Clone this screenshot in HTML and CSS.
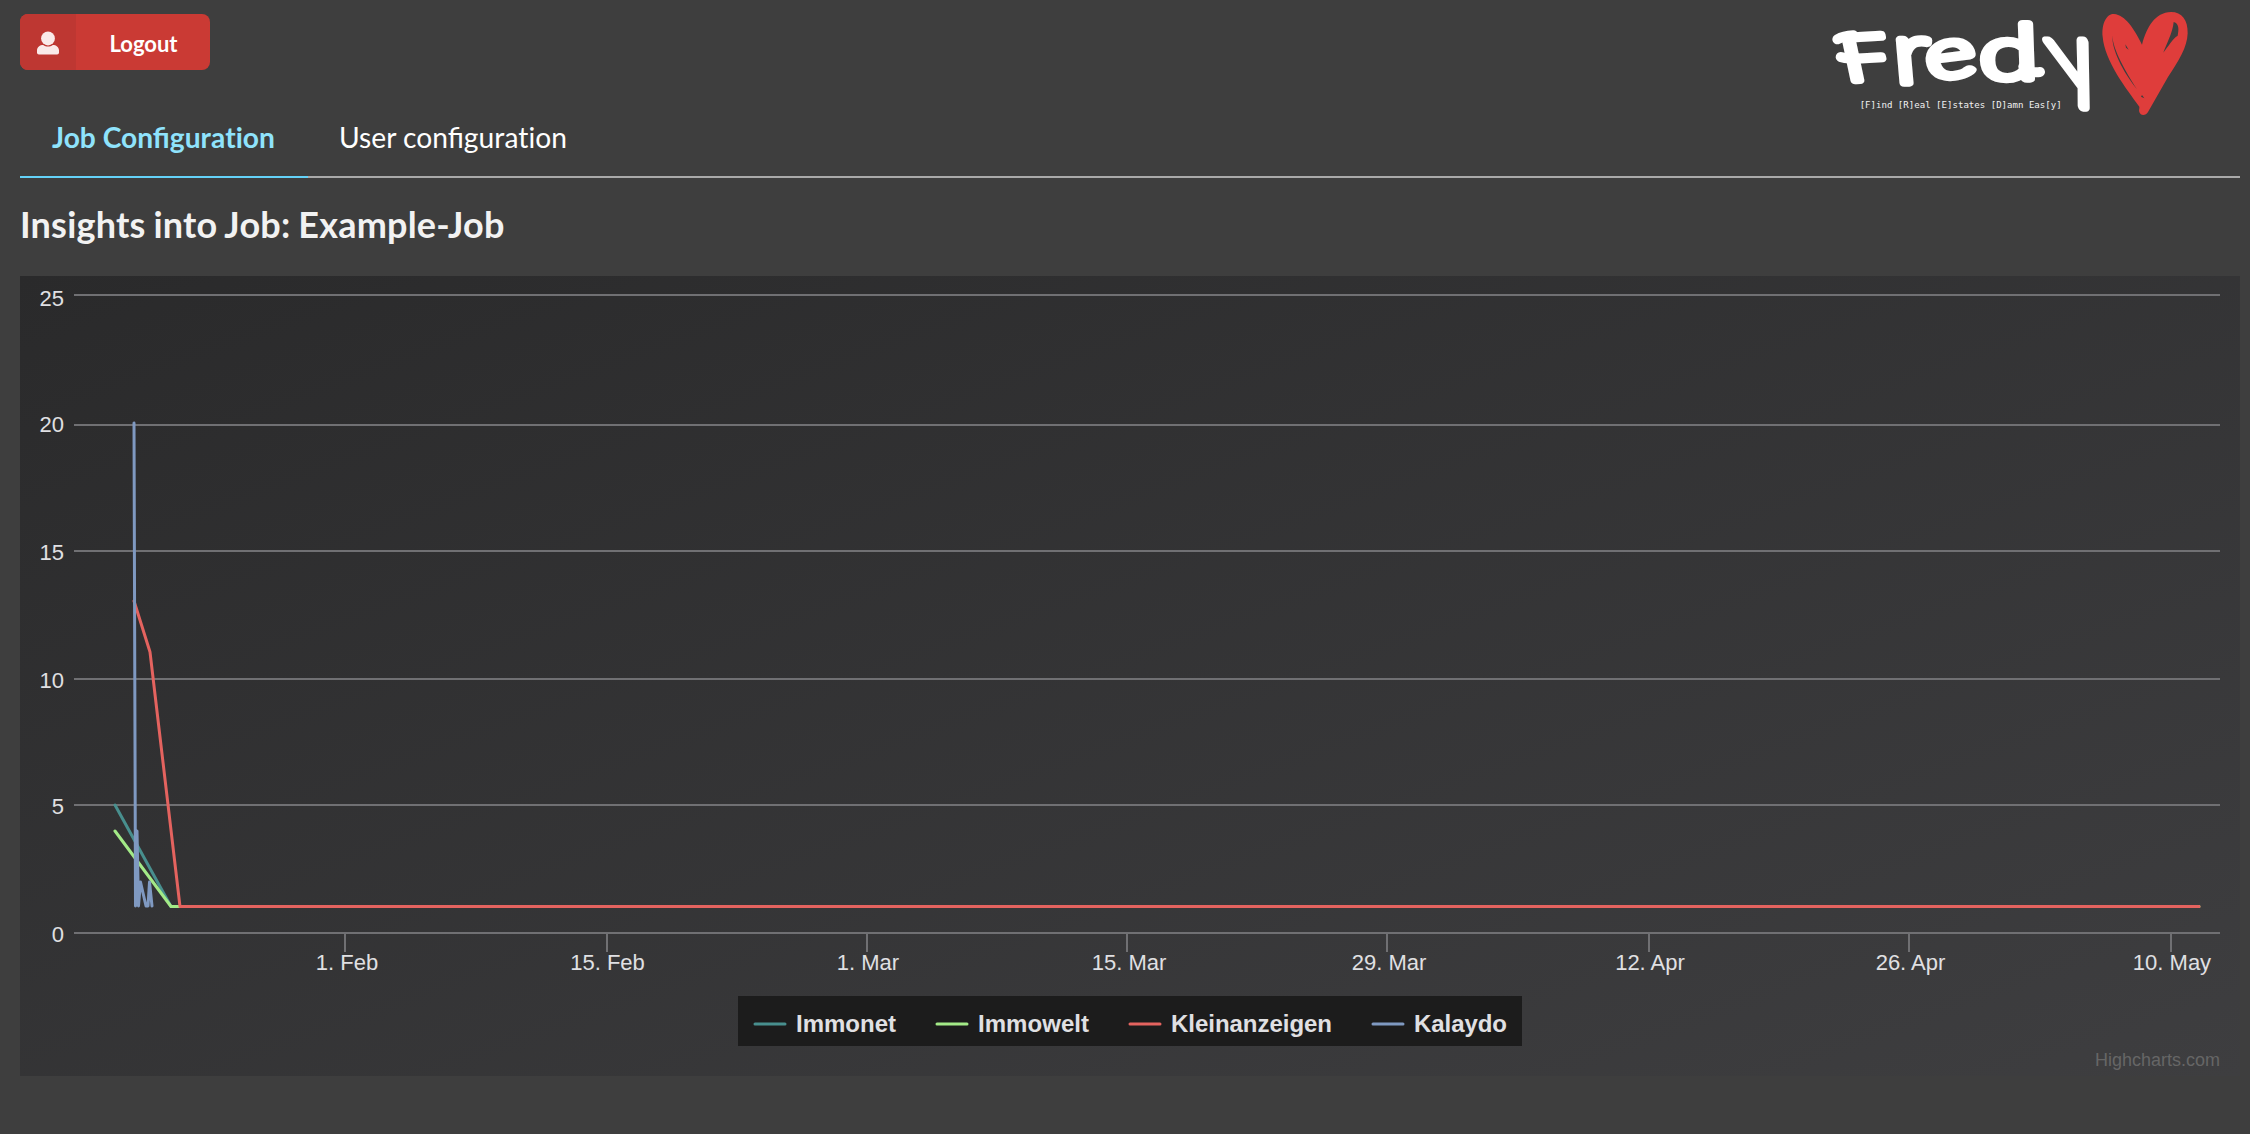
FILE: index.html
```html
<!DOCTYPE html>
<html lang="en">
<head>
<meta charset="utf-8">
<title>Fredy</title>
<link rel="stylesheet" href="styles.css">
</head>
<body>
<header class="header">
  <button class="logout" type="button">
    <span class="logout-icon">
      <svg width="24" height="24" viewBox="0 0 24 24"><ellipse cx="12" cy="7.4" rx="6.9" ry="7"/><path d="M1 19.5c0-3.500 3-5.500 6.200-5.500 3 2 6.600 2 9.600 0 3.200 0 6.200 2 6.200 5.500v2c0 1.200-.8 1.900-1.900 1.900H2.900C1.800 23.400 1 22.700 1 21.500z"/></svg>
    </span>
    <span class="logout-label">Logout</span>
  </button>
  <svg class="logo" width="372" height="112" viewBox="48 24 1116 336">
    <g class="wordmark">
      <path class="flourish" d="M82 118Q100 108 130 106M92 171Q110 178 140 174"/>
      <text transform="translate(110 243) skewX(9) rotate(-3) scale(1.32 1)" font-size="188">F</text>
      <text transform="translate(256 250) skewX(5) scale(1.22 1)" font-size="262">r</text>
      <text transform="translate(354 240) rotate(-7) scale(1.36 1)" font-size="212">e</text>
      <text transform="translate(510 236) skewX(2) scale(1.4 1)" font-size="228">d</text>
      <text class="tail" transform="translate(760 270) skewX(21) scale(.84 1)" font-size="296">y</text>
      <path class="flourish" d="M640 200Q656 220 690 216"/>
    </g>
    <text class="tagline" x="149" y="325" textLength="606" lengthAdjust="spacingAndGlyphs">[F]ind [R]eal [E]states [D]amn Eas[y]</text>
    <path class="heart" d="M912 42C945 44 974 88 996 134C1010 82 1035 37 1083 36C1116 36 1134 60 1133 100C1132 142 1105 185 1074 231L1014 336C1008 347 992 349 988 336C986 330 989 325 988 320C950 267 884 184 878 110C874 72 890 40 912 42Z"/>
    <path class="scratch" d="M907 106C908 148 947 216 981 268C952 232 905 160 907 106ZM1091 66C1109 71 1106 91 1103 107C1088 116 1075 139 1060 158C1067 137 1088 99 1091 66ZM946 133L956 149L948 143ZM996 285L1003 295L993 290Z"/>
  </svg>
</header>
<nav class="tabs">
  <a class="tab tab-active">Job Configur<span class="plain">ation</span></a>
  <a class="tab">User configur<span class="plain">ation</span></a>
</nav>
<main>
  <h1 class="title">Insights into Job: Example-Job</h1>
  <svg class="chart" width="2220" height="800" viewBox="20 276 2220 800">
    <defs><linearGradient id="chart-bg" x1="0" y1="0" x2="1" y2="1"><stop offset="0" stop-color="#2a2a2b"/><stop offset="1" stop-color="#3e3e40"/></linearGradient></defs>
    <rect x="20" y="276" width="2220" height="800" fill="url(#chart-bg)"/>
    <path class="grid" d="M74 295H2220M74 425H2220M74 551H2220M74 679H2220M74 805H2220M74 933H2220"/>
    <path class="grid" d="M345 934V952M607 934V952M867 934V952M1127 934V952M1387 934V952M1649 934V952M1909 934V952M2171 934V952"/>
    <g class="label y-label">
      <text x="64" y="306">25</text><text x="64" y="432">20</text><text x="64" y="560">15</text><text x="64" y="688">10</text><text x="64" y="814">5</text><text x="64" y="942">0</text>
    </g>
    <g class="label x-label">
      <text x="347" y="970">1. Feb</text><text x="607.500" y="970">15. Feb</text><text x="868" y="970">1. Mar</text><text x="1129" y="970">15. Mar</text><text x="1389" y="970">29. Mar</text><text x="1650" y="970">12. Apr</text><text x="1910.500" y="970">26. Apr</text><text x="2172" y="970">10. May</text>
    </g>
    <g class="series">
      <path class="immonet" d="M115 805L171 906.500H180"/>
      <path class="immowelt" d="M115 831L171 906.500H2199"/>
      <path class="kleinanzeigen" d="M134 601L150 652L180 906.500H2199"/>
      <path class="kalaydo" d="M134 423L135.500 906L137 831L138.500 906L140.500 882L146 906L148 906L149.500 882L152 906"/>
    </g>
    <rect class="legend-box" x="738" y="996" width="784" height="50"/>
    <g class="series">
      <path class="immonet" d="M755 1024H785"/><path class="immowelt" d="M937 1024H967"/><path class="kleinanzeigen" d="M1130 1024H1160"/><path class="kalaydo" d="M1373 1024H1403"/>
    </g>
    <g class="legend-text">
      <text x="796" y="1032" textLength="100">Immonet</text><text x="978" y="1032" textLength="111">Immowelt</text><text x="1171" y="1032" textLength="161">Kleinanzeigen</text><text x="1414" y="1032" textLength="93">Kalaydo</text>
    </g>
    <text class="credits" x="2220" y="1066">Highcharts.com</text>
  </svg>
</main>
</body>
</html>
```
FILE: styles.css
```css
* { box-sizing: border-box; }
body { margin: 0; padding: 0 10px 0 20px; background: #3e3e3e; color: #f2f2f2; font-family: Lato, sans-serif; min-height: 1134px; }
.header { display: flex; justify-content: space-between; align-items: flex-start; height: 98px; padding: 8px 42px 0 0; }
.logout { display: flex; align-items: stretch; width: 190px; height: 56px; margin-top: 6px; padding: 0; border: 0; border-radius: 8px; overflow: hidden; background: #ca3a34; color: #fff; font: 700 22px/56px Lato, sans-serif; }
.logout-icon { display: flex; align-items: center; justify-content: center; width: 56px; background: #be3732; }
.logout-icon svg { fill: #faeae9; margin-top: 2px; }
.logout-label { flex: 1; padding: 2px 0 0 1px; text-align: center; }
.logo { display: block; overflow: visible; }
.wordmark text { font-family: Lato, sans-serif; font-weight: 300; fill: #fff; stroke: #fff; stroke-width: 22; stroke-linejoin: round; }
.wordmark .tail { stroke-width: 26; }
.flourish { fill: none; stroke: #fff; stroke-width: 30; stroke-linecap: round; }
.tagline { font: 27px "DejaVu Sans Mono", monospace; fill: #f2f2f2; }
.heart { fill: #df3d3b; }
.scratch { fill: #3e3e3e; }
.tabs { display: flex; height: 80px; border-bottom: 2px solid #a9a9a9; }
.tab { height: 80px; padding: 22px 31px 0; font-size: 28.200px; line-height: 34px; white-space: nowrap; color: #fff; }
.tab-active { width: 288px; padding-left: 32px; font-weight: 700; color: #8fe3fc; border-bottom: 2px solid #64d2f8; }
.plain { font-variant-ligatures: none; }
.title { height: 98px; margin: 0; padding-top: 24px; font-size: 36px; line-height: 44px; font-weight: 700; letter-spacing: .2px; word-spacing: -1px; }
.chart { display: block; font-family: "Liberation Sans", Arial, sans-serif; }
.grid { fill: none; stroke: #707073; stroke-width: 2; }
.label { fill: #e0e0e3; font-size: 22px; }
.y-label { text-anchor: end; }
.x-label { text-anchor: middle; }
.series path { fill: none; stroke-width: 3; stroke-linejoin: round; stroke-linecap: round; }
.series .immonet { stroke: #488f8e; }
.series .immowelt { stroke: #a3ea87; }
.series .kleinanzeigen { stroke: #e4635f; }
.series .kalaydo { stroke: #7f99c1; }
.legend-box { fill: #1c1c1c; }
.legend-text { font-size: 24px; font-weight: 700; fill: #e0e0e3; }
.credits { font-size: 18px; fill: #666; text-anchor: end; }
```
